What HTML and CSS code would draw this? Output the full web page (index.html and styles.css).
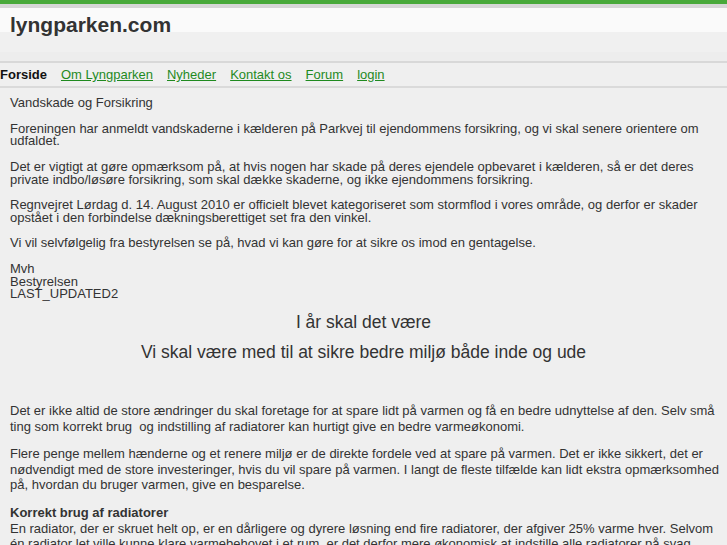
FILE: index.html
```html
<!DOCTYPE html>
<html lang="da">
<head>
    <meta charset="UTF-8">
    <title>lyngparken.com</title>
    <link rel="stylesheet" href="styles.css">
</head>
<body>
    <div id="header">
        <div class="title">lyngparken.com</div>
    </div>
    <div id="menu">
        <span class="current">Forside</span>
        <a href="#">Om Lyngparken</a>
        <a href="#">Nyheder</a>
        <a href="#">Kontakt os</a>
        <a href="#">Forum</a>
        <a href="#">login</a>
    </div>
    <div id="content">
        <div class="news">
            <p>Vandskade og Forsikring</p>
            <p>Foreningen har anmeldt vandskaderne i kælderen på Parkvej til ejendommens forsikring, og vi skal senere orientere om udfaldet.</p>
            <p>Det er vigtigt at gøre opmærksom på, at hvis nogen har skade på deres ejendele opbevaret i kælderen, så er det deres private indbo/løsøre forsikring, som skal dække skaderne, og ikke ejendommens forsikring.</p>
            <p>Regnvejret Lørdag d. 14. August 2010 er officielt blevet kategoriseret som stormflod i vores område, og derfor er skader opstået i den forbindelse dækningsberettiget set fra den vinkel.</p>
            <p>Vi vil selvfølgelig fra bestyrelsen se på, hvad vi kan gøre for at sikre os imod en gentagelse.</p>
            <p>Mvh<br>Bestyrelsen<br>LAST_UPDATED2</p>
        </div>
        <h2>I år skal det være</h2>
        <h2>Vi skal være med til at sikre bedre miljø både inde og ude</h2>
        <div class="article">
            <p>Det er ikke altid de store ændringer du skal foretage for at spare lidt på varmen og få en bedre udnyttelse af den. Selv små ting som korrekt brug&nbsp; og indstilling af radiatorer kan hurtigt give en bedre varmeøkonomi.</p>
            <p>Flere penge mellem hænderne og et renere miljø er de direkte fordele ved at spare på varmen. Det er ikke sikkert, det er nødvendigt med de store investeringer, hvis du vil spare på varmen. I langt de fleste tilfælde kan lidt ekstra opmærksomhed på, hvordan du bruger varmen, give en besparelse.</p>
            <p><b>Korrekt brug af radiatorer</b><br>En radiator, der er skruet helt op, er en dårligere og dyrere løsning end fire radiatorer, der afgiver 25% varme hver. Selvom én radiator let ville kunne klare varmebehovet i et rum, er det derfor mere økonomisk at indstille alle radiatorer på svag varme.</p>
        </div>
    </div>
</body>
</html>
```

FILE: styles.css
```css
body {
    margin: 0;
    background-color: #efefef;
    color: #333333;
    font-family: "Liberation Sans", Arial, sans-serif;
    font-size: 13px;
    border-top: 4px solid #48a93a;
}

#header {
    height: 53px;
    border-top: 4px solid #d6d6d6;
    border-bottom: 2px solid #d8d8d8;
    background: linear-gradient(#fafafa 0, #fafafa 24px, #f0f0f0 24px, #f0f0f0 44px, #ededed 44px);
}

.title {
    padding: 5px 10px 0;
    font-size: 21px;
    font-weight: bold;
    color: #333333;
}

#menu {
    height: 23px;
    line-height: 24px;
    border-bottom: 2px solid #dadada;
    display: flex;
    gap: 14px;
}

#menu a {
    color: #1f8a1f;
}

.current {
    font-weight: bold;
    color: #111111;
}

#content {
    padding: 9px 6px 0 10px;
}

.news p {
    margin: 0 0 12.75px;
    line-height: 12.75px;
}

.news p:last-child {
    margin-bottom: 10.75px;
}

h2 {
    text-align: center;
    font-size: 17.5px;
    font-weight: normal;
    margin: 0 0 10px;
    line-height: 20px;
    padding-right: 4px;
}

.article {
    padding-top: 31px;
}

.article p {
    margin: 0 0 11.5px;
    line-height: 15.8px;
}
```
